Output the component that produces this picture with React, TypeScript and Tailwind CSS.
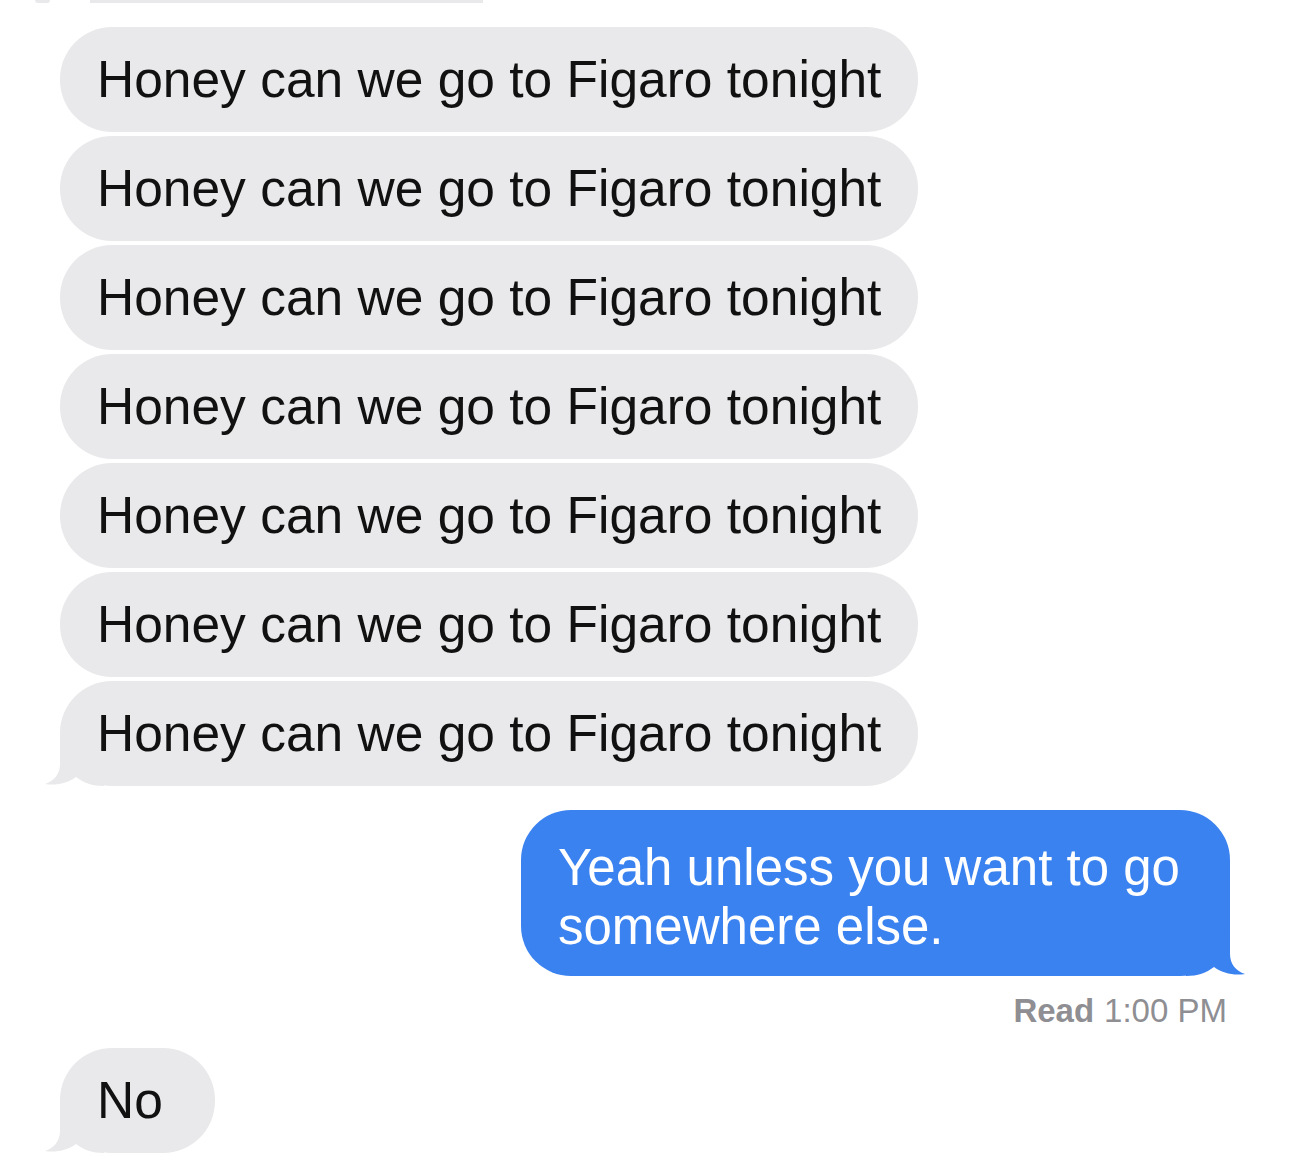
import React from "react";

const GREY = "#e9e9eb";
const BLUE = "#3a82f0";

function TailLeft({ color }: { color: string }) {
  return (
    <svg
      className="absolute bottom-0 left-[-16px]"
      width="60"
      height="50"
      viewBox="0 0 60 50"
    >
      <path
        d="M16 0 L16 28 C16 38 10 45 1 48 C12 50 24 47 32 41 C40 47 48 50 60 50 L60 0 Z"
        fill={color}
      />
    </svg>
  );
}

function TailRight({ color }: { color: string }) {
  return (
    <svg
      className="absolute bottom-0 right-[-16px]"
      width="60"
      height="50"
      viewBox="0 0 60 50"
    >
      <path
        d="M44 0 L44 28 C44 38 50 45 59 48 C48 50 36 47 28 41 C20 47 12 50 0 50 L0 0 Z"
        fill={color}
      />
    </svg>
  );
}

function GreyBubble({ text, tail, pr }: { text: string; tail?: boolean; pr: string }) {
  return (
    <div className="relative self-start">
      {tail && <TailLeft color={GREY} />}
      <div
        className={`relative rounded-[52px] bg-[#e9e9eb] h-[105px] flex items-center pl-[37px] ${pr} text-[51.5px] leading-none text-[#111] whitespace-nowrap`}
      >
        {text}
      </div>
    </div>
  );
}

export default function App() {
  const msg = "Honey can we go to Figaro tonight";
  return (
    <div
      className="w-[1290px] h-[1171px] bg-white overflow-hidden flex flex-col"
      style={{ fontFamily: '"Liberation Sans", Arial, sans-serif' }}
    >
      <div className="flex h-[3px]">
        <div className="ml-[35px] w-[15px] bg-[#e9e9eb] rounded-b" />
        <div className="ml-[40px] w-[393px] bg-[#e9e9eb]" />
      </div>
      <div className="flex flex-col gap-[4px] pl-[60px] mt-[24px]">
        {Array.from({ length: 7 }).map((_, i) => (
          <GreyBubble key={i} text={msg} tail={i === 6} pr="pr-[37px]" />
        ))}
      </div>
      <div className="flex justify-end pr-[60px] mt-[24px]">
        <div className="relative">
          <TailRight color={BLUE} />
          <div className="relative w-[709px] h-[166px] rounded-[50px] bg-[#3a82f0] text-white text-[51px] leading-[59px] pl-[37px] pr-[24px] pt-[28px]">
            Yeah unless you want to go somewhere else.
          </div>
        </div>
      </div>
      <div className="flex justify-end pr-[63px] mt-[17px] text-[33px] leading-[36px] text-[#8e8e93]">
        <span className="font-bold">Read</span>
        <span className="ml-[10px]">1:00 PM</span>
      </div>
      <div className="flex pl-[60px] mt-[19px]">
        <GreyBubble text="No" tail pr="pr-[52px]" />
      </div>
    </div>
  );
}
